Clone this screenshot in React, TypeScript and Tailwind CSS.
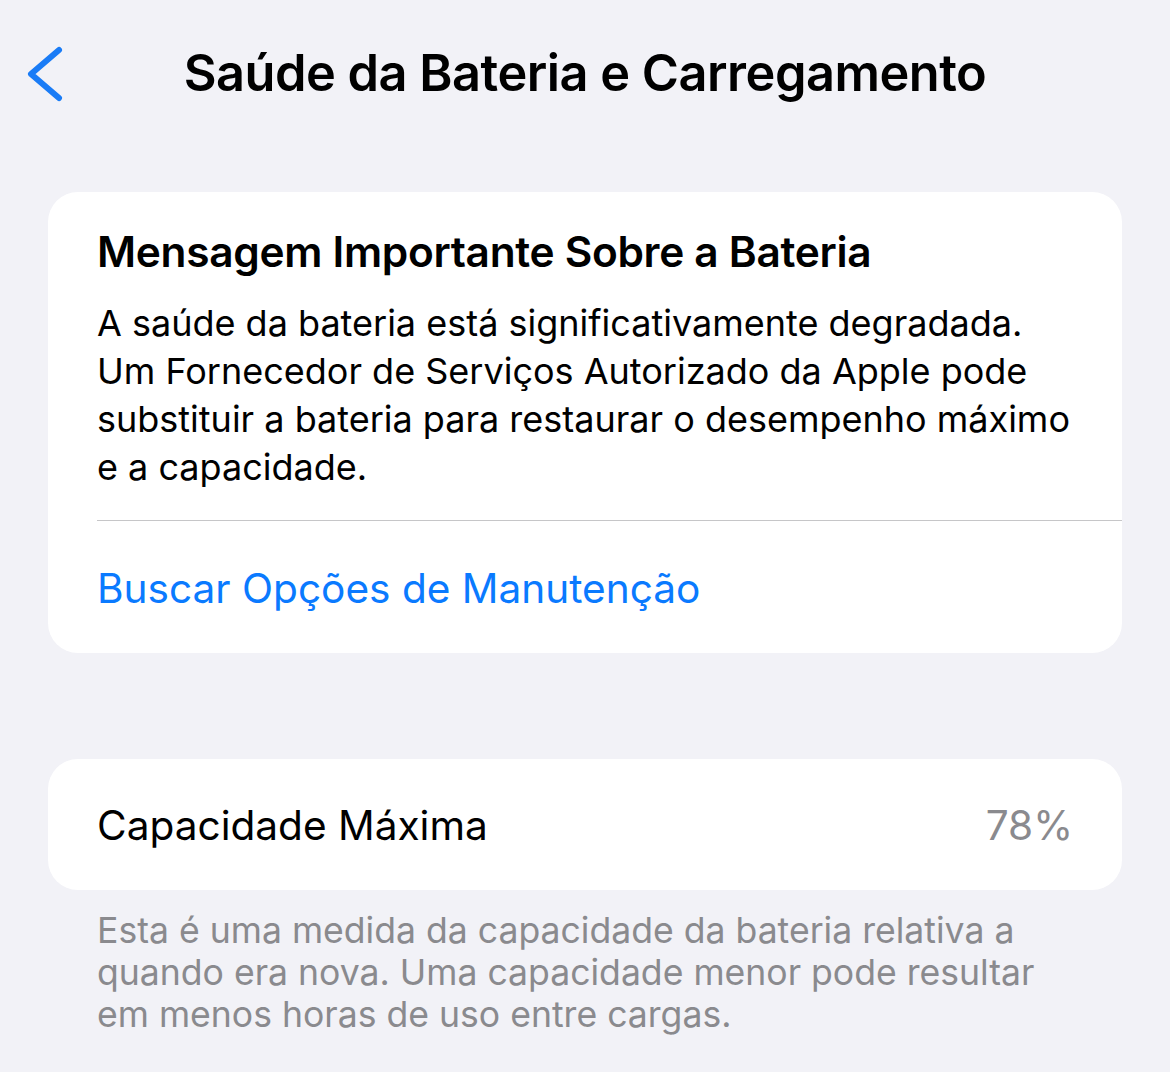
const BackChevron = () => (
  <svg width="42" height="60" viewBox="0 0 42 60" fill="none">
    <path
      d="M35 6 L7 30 L35 54"
      stroke="#1a7cf6"
      strokeWidth="6"
      strokeLinecap="round"
      strokeLinejoin="round"
    />
  </svg>
);

const App = () => {
  return (
    <div
      className="min-h-[1072px] w-[1170px] bg-[#f2f2f7] text-black"
      style={{ fontFamily: "Inter, 'Noto Sans', sans-serif" }}
    >
      <div className="grid h-[146px] grid-cols-[1fr_auto_1fr] items-center">
        <div className="pl-[24px] pt-[2px]">
          <BackChevron />
        </div>
        <div className="text-[50.5px] font-semibold tracking-[-0.5px]">
          Saúde da Bateria e Carregamento
        </div>
        <div />
      </div>

      <div className="mx-[48px] mt-[46px] rounded-[30px] bg-white">
        <div className="px-[49px] pt-[34px]">
          <div className="text-[42.4px] font-semibold leading-[52px] tracking-[-0.3px]">
            Mensagem Importante Sobre a Bateria
          </div>
          <div className="mt-[21px] text-[36px] leading-[48px]">
            A saúde da bateria está significativamente degradada.
            <br />
            Um Fornecedor de Serviços Autorizado da Apple pode
            <br />
            substituir a bateria para restaurar o desempenho máximo
            <br />
            e a capacidade.
          </div>
        </div>
        <div className="ml-[49px] mt-[29px] h-[1px] bg-[#c6c6c8]" />
        <div className="px-[49px] pb-[39px] pt-[43px] text-[40.6px] leading-[50px] text-[#0a7aff]">
          Buscar Opções de Manutenção
        </div>
      </div>

      <div className="mx-[48px] mt-[106px] flex h-[131px] items-center justify-between rounded-[30px] bg-white px-[49px] pt-[4px]">
        <span className="text-[40.6px]">Capacidade Máxima</span>
        <span className="text-[40.6px] text-[#8a8a8e]">78%</span>
      </div>

      <div className="px-[97px] pt-[20px] text-[35.6px] leading-[42px] text-[#8a8a8e]">
        Esta é uma medida da capacidade da bateria relativa a
        <br />
        quando era nova. Uma capacidade menor pode resultar
        <br />
        em menos horas de uso entre cargas.
      </div>
    </div>
  );
};

export default App;
